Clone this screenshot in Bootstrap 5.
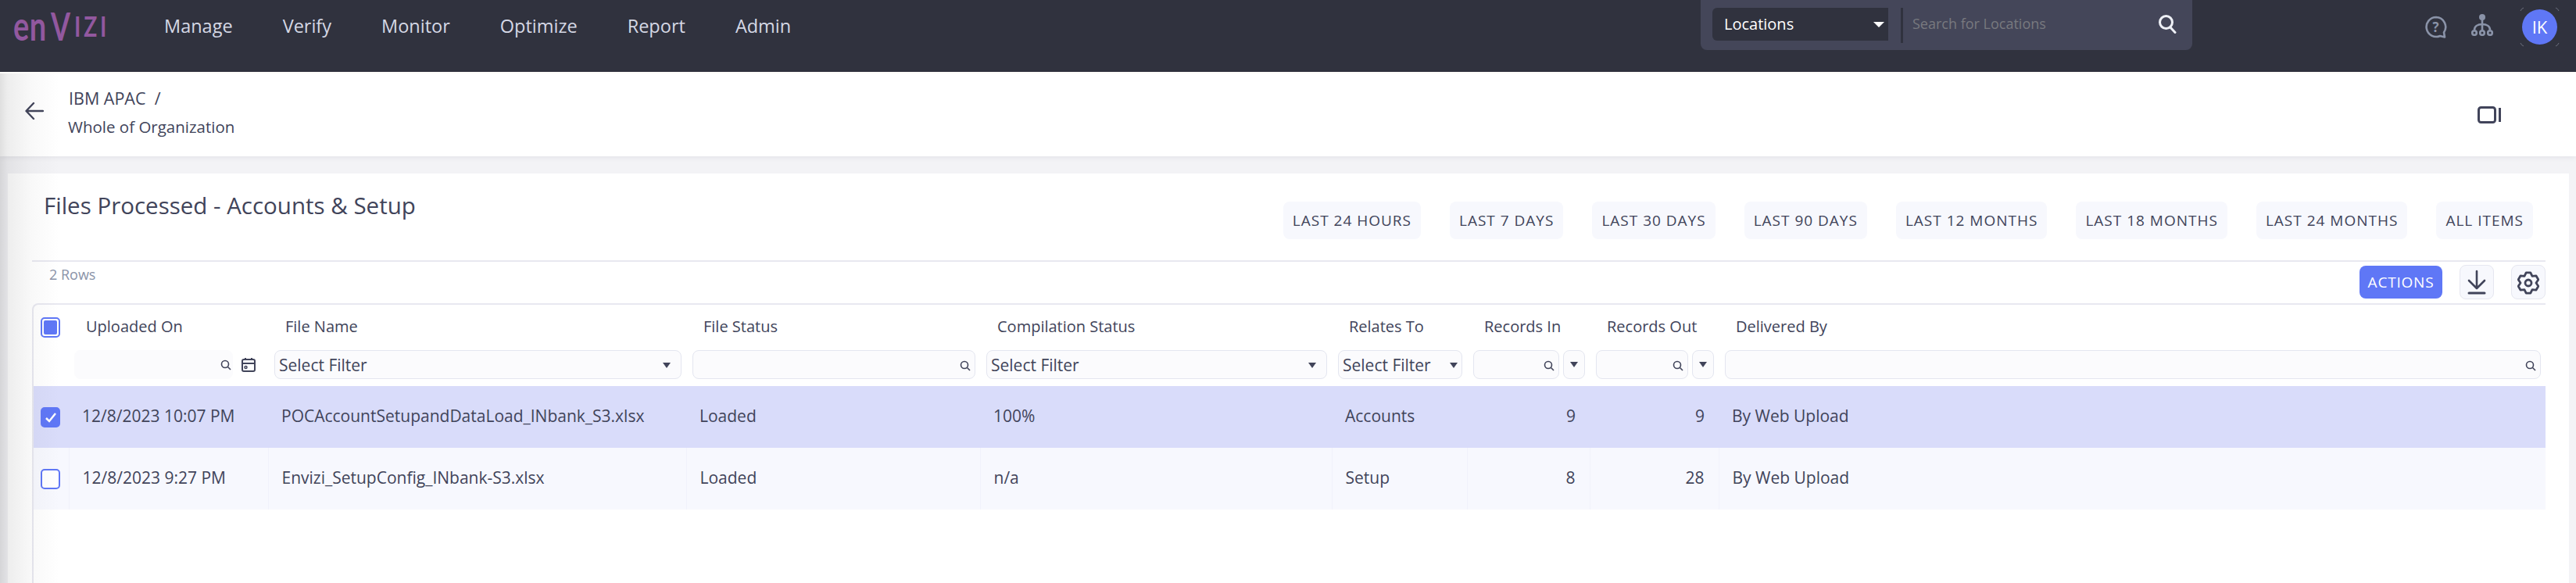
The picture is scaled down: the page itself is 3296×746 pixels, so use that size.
<!DOCTYPE html>
<html lang="en">
<head>
  <meta charset="UTF-8" />
  <title>Files Processed - Accounts &amp; Setup</title>
  <link href="https://cdn.jsdelivr.net/npm/bootstrap@5.3.0/dist/css/bootstrap.min.css" rel="stylesheet" />
  <style>
    html, body { height: 100%; }
    body { font-family: "Open Sans", Lato, sans-serif; font-size: 20px; color: #41445a; background: #f3f3f6; overflow: hidden; }
    .edge-shade { position: absolute; left: 0; top: 94px; bottom: 0; width: 76px; pointer-events: none; background: linear-gradient(to right, rgba(60,60,60,.16), rgba(60,60,60,.09) 13%, rgba(60,60,60,.03) 54%, rgba(60,60,60,0)); }
    .top-bar { height: 92px; background: #30323e; padding: 0 0 0 17px; }
    .logo-text { color: #92589f; font-family: Lato, sans-serif; width: 122px; height: 50px; font-weight: 700; margin-top: 7px; line-height: 50px; }
    .logo-en { font-size: 38px; display: inline-block; transform: scaleY(1.35); letter-spacing: .5px; width: 48px; }
    .logo-v { font-size: 36px; display: inline-block; transform: scaleY(1.38); width: 28px; }
    .logo-izi { font-size: 37px; display: inline-block; letter-spacing: 5px; margin-left: 2px; transform: scaleX(.76); transform-origin: left center; }
    .main-nav { margin-left: 71px; gap: 64px; margin-top: 19px; }
    .main-nav a { color: #d5d8e5; font-size: 23.500px; line-height: 28px; text-decoration: none; }
    .search-box { width: 629px; height: 64px; background: #444659; border-radius: 0 0 8px 8px; padding: 10px 20px 0 15px; margin-left: auto; }
    .scope-select { width: 225px; height: 42px; background: #30323e; color: #fff; border-radius: 6px 0 0 6px; font-size: 20px; padding: 0 5px 0 15px; }
    .caret-down { width: 0; height: 0; border-left: 7px solid transparent; border-right: 7px solid transparent; border-top: 7px solid #fff; }
    .caret-sm { width: 0; height: 0; border-left: 5px solid transparent; border-right: 5px solid transparent; border-top: 7px solid #41445a; }
    .search-div { width: 3px; height: 45px; background: #30323e; margin: 0 12px 0 16px; }
    .search-hint { color: #78797f; font-size: 18px; margin-top: 2px; }
    .user-tools { width: 491px; position: relative; }
    .help-icon { margin: 20px 0 0 297px; }
    .org-icon { margin: 17px 0 0 30px; }
    .avatar { width: 45px; height: 45px; border-radius: 50%; background: #5f77f6; color: #fff; font-size: 22px; margin: 12px 0 0 37px; position: relative; flex: 0 0 45px; }
    .avatar svg { position: absolute; left: -3px; top: -3px; }
    .crumb-bar { height: 108px; background: #fff; border-top: 2px solid #fdfcf9; box-shadow: 0 2px 6px rgba(60,60,90,.08); padding: 0 96px 0 32px; }
    .back-icon { margin-bottom: 10px; }
    .crumb-bar .crumb-text { margin: 0 0 7px 31px; font-size: 20.500px; line-height: 37px; }
    .crumb-org { font-size: 21.500px; margin-left: 1px; }
    .main-card { flex: 1 1 auto; margin: 22px 9px 0 10px; background: #fff; padding: 0 30px 0 31px; min-height: 0; }
    .title-row { height: 111px; padding: 23px 16px 0 15px; }
    .page-title { font-size: 29.500px; line-height: 36px; font-weight: 500; margin: 0; color: #41445a; }
    .range-list { margin-top: 13px; }
    .range-btn { height: 48px; padding: 0 12px; margin-left: 37px; background: #f7f8fd; color: #41445a; border: 0; border-radius: 8px; font-size: 19px; letter-spacing: 1px; }
    .tool-row { height: 55px; border-top: 2px solid #e8e8f0; padding-left: 22px; }
    .row-count { color: #8a93a8; font-size: 18px; margin-top: 3px; }
    .act-btn { width: 106px; height: 42px; background: #5f77f6; color: #fff; border: 0; border-radius: 8px; font-size: 19px; letter-spacing: .8px; padding: 0; margin-top: 5px; }
    .icon-btn { width: 44px; height: 44px; padding: 0; background: #f7f8fd; border: 1px solid #e6e7f0; border-radius: 8px; margin-left: 22px; margin-top: 4px; }
    .grid-wrap { flex: 1 1 auto; border-top: 2px solid #e8e8f0; border-left: 2px solid #e8e8f0; border-top-left-radius: 8px; }
    .data-grid { table-layout: fixed; width: 3214px; margin: 0; border-collapse: collapse; color: #41445a; font-size: 21px; }
    .data-grid th, .data-grid td { border: 0; padding: 0; vertical-align: middle; background: transparent; color: inherit; box-shadow: none; }
    .data-grid th { font-weight: 500; font-size: 20px; }
    .data-grid col:nth-child(1) { width: 45px; }
    .data-grid col:nth-child(2) { width: 255px; }
    .data-grid col:nth-child(3) { width: 535px; }
    .data-grid col:nth-child(4) { width: 376px; }
    .data-grid col:nth-child(5) { width: 450px; }
    .data-grid col:nth-child(6) { width: 173px; }
    .data-grid col:nth-child(7) { width: 157px; }
    .data-grid col:nth-child(8) { width: 165px; }
    .data-grid col:nth-child(9) { width: 1058px; }
    .head-row th { height: 58px; padding: 0 0 3px 22px; }
    .head-row th:first-child { padding: 0 0 0 9px; }
    .filter-row th { height: 46px; padding: 0 6px 9px 8px; font-weight: 400; }
    .filter-row th.date-cell { padding: 0 16px 9px 7px; }
    .date-cell .filter-box { margin-right: 11px; padding: 0 1px 0 0; }
    .filter-box { height: 37px; background: #fbfbfd; border: 1px solid #e4e6f0; border-radius: 8px; padding: 2px 5px 0; font-size: 21px; color: #41445a; }
    .filter-box.plain { border-color: #fbfbfd; }
    .filter-pair { gap: 5px; }
    .filter-pair .filter-box:last-child { flex: 0 0 28px; justify-content: center; padding: 0; }
    .data-grid td { height: 79px; padding: 0 0 2px 17px; }
    .data-grid td:first-child { padding: 0 0 0 9px; }
    .data-grid td.num { text-align: right; padding: 0 18px 2px 0; }
    .row-picked td { background: #d9dcfa; }
    .row-plain td { background: #f7f8fe; border-left: 1px solid #f1f2fb; }
    .row-plain td:first-child { border-left: 0; }
    .tick { width: 25px; height: 26px; display: flex; align-items: center; justify-content: center; border: 2px solid #5f77f6; border-radius: 5px; background: #fff; }
    .tick.on { background: #5f77f6; }
    .tick.part { padding: 2px; }
    .tick.part i { display: block; width: 100%; height: 100%; background: #5f77f6; border-radius: 2px; }
  </style>
</head>
<body class="d-flex flex-column">

<nav class="top-bar d-flex align-items-start flex-shrink-0">
  <div class="logo-text text-nowrap"><span class="logo-en">en</span><span class="logo-v">V</span><span class="logo-izi">IZI</span></div>
  <div class="main-nav d-flex">
    <a href="#">Manage</a>
    <a href="#">Verify</a>
    <a href="#">Monitor</a>
    <a href="#">Optimize</a>
    <a href="#">Report</a>
    <a href="#">Admin</a>
  </div>
  <div class="search-box d-flex align-items-start">
    <div class="scope-select d-flex align-items-center justify-content-between">Locations <span class="caret-down"></span></div>
    <div class="search-div"></div>
    <div class="search-hint flex-grow-1 lh-lg">Search for Locations</div>
    <svg class="mt-2" width="24" height="25" viewBox="0 0 24 25" fill="none" stroke="#eef0f6" stroke-width="3" stroke-linecap="round"><circle cx="10.500" cy="10.500" r="8"/><path d="M16 17l6 6.500"/></svg>
  </div>
  <div class="user-tools d-flex align-items-start">
    <svg class="help-icon" width="30" height="30" viewBox="0 0 30 30" fill="none" stroke="#8a93a8" stroke-width="2.600"><path d="M15 2a12.500 12.500 0 1 0 5 24l6 1.500-1-6A12.500 12.500 0 0 0 15 2z" stroke-linejoin="round"/><text x="14.500" y="21" text-anchor="middle" font-size="17" font-weight="700" fill="#8a93a8" stroke="none" font-family="Open Sans">?</text></svg>
    <svg class="org-icon" width="28" height="29" viewBox="0 0 28 29" fill="none" stroke="#8a93a8" stroke-width="2.600"><circle cx="14" cy="5" r="4" fill="#8a93a8" stroke="none"/><path d="M14 8v14M14 14c-6 0-10 3-10 7.500M14 14c6 0 10 3 10 7.500"/><circle cx="4" cy="25" r="2.800"/><circle cx="14" cy="25" r="2.800"/><circle cx="24" cy="25" r="2.800"/></svg>
    <div class="avatar d-flex align-items-center justify-content-center">IK
      <svg width="51" height="51" viewBox="0 0 51 51" fill="none" stroke="#6b6e7c" stroke-width="1"><path d="M1 5q1-3 4-4M46 1q3 1 4 4M1 46q1 3 4 4M46 50q3-1 4-4"/></svg>
    </div>
  </div>
</nav>

<header class="crumb-bar d-flex align-items-center flex-shrink-0">
  <svg class="back-icon" width="24" height="24" viewBox="0 0 24 24" fill="none" stroke="#41445a" stroke-width="2.400" stroke-linecap="round" stroke-linejoin="round"><path d="M23 12H2M11 2L1.500 12 11 22"/></svg>
  <div class="crumb-text">
    <div class="crumb-org">IBM APAC &nbsp;/</div>
    <div>Whole of Organization</div>
  </div>
  <svg class="ms-auto" width="30" height="22" viewBox="0 0 30 22" fill="none" stroke="#41445a" stroke-width="3"><rect x="1.500" y="1.500" width="21" height="19" rx="3"/><path d="M28.500 2v18"/></svg>
</header>

<main class="main-card d-flex flex-column">
  <div class="title-row d-flex justify-content-between flex-shrink-0">
    <h1 class="page-title">Files Processed - Accounts &amp; Setup</h1>
    <div class="range-list d-flex">
      <button class="range-btn">LAST 24 HOURS</button>
      <button class="range-btn">LAST 7 DAYS</button>
      <button class="range-btn">LAST 30 DAYS</button>
      <button class="range-btn">LAST 90 DAYS</button>
      <button class="range-btn">LAST 12 MONTHS</button>
      <button class="range-btn">LAST 18 MONTHS</button>
      <button class="range-btn">LAST 24 MONTHS</button>
      <button class="range-btn">ALL ITEMS</button>
    </div>
  </div>
  <div class="tool-row d-flex align-items-start flex-shrink-0">
    <div class="row-count">2 Rows</div>
    <div class="ms-auto d-flex align-items-start">
      <button class="act-btn">ACTIONS</button>
      <button class="icon-btn"><svg width="24" height="32" viewBox="0 0 24 32" fill="none" stroke="#41445a" stroke-width="2.600" stroke-linecap="round" stroke-linejoin="round"><path d="M12 2v22M2 14l10 10 10-10"/><path d="M2 30h20" stroke-width="3"/></svg></button>
      <button class="icon-btn"><svg width="28" height="30" viewBox="0 0 28 30" fill="none" stroke="#41445a" stroke-width="2.800" stroke-linejoin="round"><path d="M11.200 1.800H16.800L19 6.340 24.030 5.970 26.840 10.830 24 15 26.840 19.170 24.030 24.030 19 23.660 16.800 28.200H11.200L9 23.660 3.970 24.030 1.160 19.170 4 15 1.160 10.830 3.970 5.970 9 6.340z"/><circle cx="14" cy="15" r="4"/></svg></button>
    </div>
  </div>
  <div class="grid-wrap">
    <table class="table data-grid">
      <colgroup><col><col><col><col><col><col><col><col><col></colgroup>
      <thead>
        <tr class="head-row">
          <th><span class="tick part"><i></i></span></th>
          <th>Uploaded On</th><th>File Name</th><th>File Status</th><th>Compilation Status</th>
          <th>Relates To</th><th>Records In</th><th>Records Out</th><th>Delivered By</th>
        </tr>
        <tr class="filter-row">
          <th></th>
          <th class="date-cell">
            <div class="d-flex align-items-center">
              <div class="filter-box plain d-flex align-items-center justify-content-end flex-grow-1"><svg width="14" height="14" viewBox="0 0 14 14" fill="none" stroke="#41445a" stroke-width="1.600"><circle cx="6" cy="6" r="4.500"/><path d="M9.500 9.500L13 13"/></svg></div>
              <svg width="18" height="18" viewBox="0 0 18 18" fill="none" stroke="#41445a" stroke-width="2"><rect x="1" y="2" width="16" height="15" rx="2"/><path d="M1 7h16M5 0v3M13 0v3"/><circle cx="5.500" cy="12" r="1.500" stroke-width="1.500"/></svg>
            </div>
          </th>
          <th><div class="filter-box d-flex align-items-center justify-content-between">Select Filter <span class="caret-sm me-2"></span></div></th>
          <th><div class="filter-box d-flex align-items-center justify-content-end"><svg width="14" height="14" viewBox="0 0 14 14" fill="none" stroke="#41445a" stroke-width="1.600"><circle cx="6" cy="6" r="4.500"/><path d="M9.500 9.500L13 13"/></svg></div></th>
          <th><div class="filter-box d-flex align-items-center justify-content-between">Select Filter <span class="caret-sm me-2"></span></div></th>
          <th><div class="filter-box d-flex align-items-center justify-content-between">Select Filter <span class="caret-sm"></span></div></th>
          <th><div class="filter-pair d-flex">
            <div class="filter-box d-flex align-items-center justify-content-end flex-grow-1"><svg width="14" height="14" viewBox="0 0 14 14" fill="none" stroke="#41445a" stroke-width="1.600"><circle cx="6" cy="6" r="4.500"/><path d="M9.500 9.500L13 13"/></svg></div>
            <div class="filter-box d-flex align-items-center"><span class="caret-sm"></span></div>
          </div></th>
          <th><div class="filter-pair d-flex">
            <div class="filter-box d-flex align-items-center justify-content-end flex-grow-1"><svg width="14" height="14" viewBox="0 0 14 14" fill="none" stroke="#41445a" stroke-width="1.600"><circle cx="6" cy="6" r="4.500"/><path d="M9.500 9.500L13 13"/></svg></div>
            <div class="filter-box d-flex align-items-center"><span class="caret-sm"></span></div>
          </div></th>
          <th><div class="filter-box d-flex align-items-center justify-content-end"><svg width="14" height="14" viewBox="0 0 14 14" fill="none" stroke="#41445a" stroke-width="1.600"><circle cx="6" cy="6" r="4.500"/><path d="M9.500 9.500L13 13"/></svg></div></th>
        </tr>
      </thead>
      <tbody>
        <tr class="row-picked">
          <td><span class="tick on"><svg width="16" height="16" viewBox="0 0 16 16" fill="none" stroke="#fff" stroke-width="2.500"><path d="M2 9l4 4 8-10"/></svg></span></td>
          <td>12/8/2023 10:07 PM</td><td>POCAccountSetupandDataLoad_INbank_S3.xlsx</td><td>Loaded</td><td>100%</td><td>Accounts</td><td class="num">9</td><td class="num">9</td><td>By Web Upload</td>
        </tr>
        <tr class="row-plain">
          <td><span class="tick"></span></td>
          <td>12/8/2023 9:27 PM</td><td>Envizi_SetupConfig_INbank-S3.xlsx</td><td>Loaded</td><td>n/a</td><td>Setup</td><td class="num">8</td><td class="num">28</td><td>By Web Upload</td>
        </tr>
      </tbody>
    </table>
  </div>
</main>

<div class="edge-shade"></div>
</body>
</html>
